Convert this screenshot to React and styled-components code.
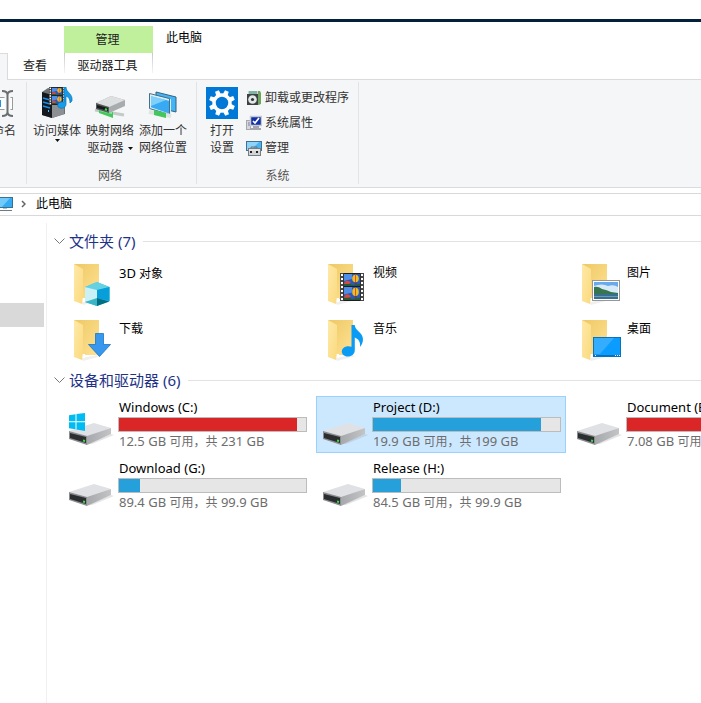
import React from "react";
import styled, { createGlobalStyle } from "styled-components";

const GlobalStyle = createGlobalStyle`
  * { box-sizing: border-box; }
  html, body, #root { height: 100%; }
  body {
    margin: 0;
    background: #fff;
    color: #000;
    font: 12px/16px "Noto Sans", "Noto Sans CJK SC", sans-serif;
    overflow: hidden;
  }
  button {
    margin: 0;
    padding: 0;
    border: 0;
    background: none;
    color: inherit;
    font: inherit;
    text-align: left;
    cursor: default;
  }
  svg { display: block; flex: none; }
`;

const Window = styled.div`
  display: flex;
  flex-direction: column;
  min-height: 100%;
  padding-top: 19px;
  overflow: hidden;
`;

const TitleBar = styled.header`
  display: grid;
  grid-template-columns: 64px 89px 1fr;
  border-top: 3px solid #04213b;
  padding-top: 4px;
  height: 34px;
`;

const ContextTitle = styled.div`
  grid-column: 2;
  display: flex;
  align-items: center;
  justify-content: center;
  padding-right: 2px;
  background: #c0f09c;
  color: #222;
`;

const WindowTitle = styled.h1`
  margin: 0;
  padding: 4px 13px;
  font-size: 12px;
  font-weight: 400;
`;

const TabBar = styled.nav`
  display: grid;
  grid-template-columns: 8px 56px 89px 1fr;
  height: 27px;
  background: linear-gradient(#dadbdc, #dadbdc) 8px 100% / 100% 1px no-repeat;
`;

const ActiveTabEdge = styled.div`
  background: #f5f6f7;
  border: 1px solid #dadbdc;
  border-width: 1px 1px 0 0;
`;

const Tab = styled.button`
  color: #222;
  text-align: center;
  padding: 0 2px 2px 0;
`;

const ContextTab = styled(Tab)`
  background:
    linear-gradient(#c8c8c8, #f4f4f4) 0 0 / 1px 20px no-repeat,
    linear-gradient(#c8c8c8, #f4f4f4) 100% 0 / 1px 20px no-repeat;
`;

const Ribbon = styled.section`
  display: flex;
  height: 108px;
  padding: 2px 0 3px;
  background: #f5f6f7;
  border-bottom: 1px solid #dadbdc;
  color: #333;
`;

const Group = styled.div`
  display: flex;
  flex-direction: column;
  justify-content: space-between;
  padding: 5px 9px 0 ${(p) => p.$start || 6}px;
  border-right: 1px solid #e2e3e4;
`;

const ClippedGroup = styled(Group)`
  width: 27px;
  padding: 5px 10px 0 0;
  align-items: flex-end;
  overflow: hidden;
`;

const GroupItems = styled.div`
  display: flex;
  gap: ${(p) => p.$gap || 5}px;
`;

const GroupLabel = styled.div`
  text-align: center;
  color: #555;
`;

const BigButton = styled.button`
  display: flex;
  flex-direction: column;
  align-items: center;
  white-space: nowrap;
  line-height: 17px;
  text-align: center;

  > svg { margin-bottom: 3px; }
`;

const Caret = styled.svg`
  display: ${(p) => (p.$inline ? "inline-block" : "block")};
  margin-left: ${(p) => (p.$inline ? 4 : 0)}px;
  vertical-align: middle;
`;

const SmallButtons = styled.div`
  display: flex;
  flex-direction: column;
  gap: 7px;
  padding-top: 2px;
`;

const SmallButton = styled.button`
  display: flex;
  align-items: center;
  gap: 3px;
  height: 18px;
  white-space: nowrap;
`;

const AddressBar = styled.nav`
  display: flex;
  align-items: center;
  height: 23px;
  margin-top: 5px;
  padding-bottom: 1px;
  border: solid #d9d9d9;
  border-width: 1px 0;
`;

const Crumb = styled.button`
  display: flex;
  align-items: center;
  padding-left: ${(p) => p.$start || 0}px;
`;

const CrumbArrow = styled.svg`
  margin-left: 8px;
`;

const Body = styled.div`
  display: flex;
  flex: 1;
  padding-top: 7px;
`;

const Sidebar = styled.aside`
  flex: none;
  width: 47px;
  padding: 80px 2px 0 0;
  border-right: 1px solid #f0f0f0;
`;

const SidebarSelection = styled.div`
  height: 24px;
  background: #d9d9d9;
`;

const Content = styled.main`
  flex: 1;
  min-width: 0;
  padding: 6px 0 0 7px;
  overflow: hidden;
`;

const SectionHeading = styled.button`
  display: flex;
  align-items: center;
  width: 100%;
  height: 24px;
  color: #1e3287;
  font-size: 15px;
  line-height: 24px;
  white-space: nowrap;

  > svg { margin-right: 4px; }

  &::after {
    content: "";
    flex: 1;
    height: 1px;
    margin-left: 8px;
    background: #e2e2e2;
  }
`;

const Tiles = styled.div`
  display: grid;
  grid-template-columns: repeat(3, 250px);
  gap: 4px;
  padding: 4px 0 3px 8px;
`;

const FolderTile = styled.button`
  display: flex;
  gap: 1px;
  height: 52px;
  padding: 3px 0 0 7px;
  line-height: 26px;
`;

const DriveTile = styled.button`
  display: grid;
  grid-template-columns: 49px 1fr;
  height: 57px;
  padding: 2px 4px 3px 6px;
  border: 1px solid ${(p) => (p.$selected ? "#99d1ff" : "transparent")};
  background: ${(p) => (p.$selected ? "#cce8ff" : "transparent")};
  white-space: nowrap;

  > svg { margin-top: 10px; }
`;

const DriveName = styled.div`
  height: 16px;
  padding-left: 1px;
`;

const UsageTrack = styled.div`
  height: 15px;
  margin: 2px 0 1px;
  border: 1px solid #bcbcbc;
  background: #e6e6e6;
`;

const UsageFill = styled.div`
  height: 100%;
  background: ${(p) => (p.$full ? "#da2626" : "#26a0da")};
`;

const DriveSpace = styled.div`
  padding-left: 1px;
  color: #6d6d6d;
`;

const Latin = styled.span`
  font-size: 13px;
`;

function RenameIcon() {
  return (
    <svg width="32" height="32" viewBox="0 0 32 32">
      <rect x="1.500" y="10.500" width="29" height="12" fill="#fff" stroke="#9a9a9a" />
      <rect x="4" y="13" width="15" height="7" fill="#1e90e8" />
      <path d="M22.500 9h6v15h-6z" fill="#f5f6f7" />
      <path d="M20 4q5.500 0 5.500 4v17q0 4-5.500 4M31 4q-5.500 0-5.500 4v17q0 4 5.500 4" fill="none" stroke="#6c6f72" strokeWidth="2" />
    </svg>
  );
}

function Balloons({ x, y, w, h }) {
  return (
    <svg x={x} y={y} width={w} height={h} viewBox="0 0 16 12" preserveAspectRatio="none">
      <rect width="16" height="12" fill="#2859b8" />
      <path d="M0 0h8v5L0 7z" fill="#4f8ee6" />
      <path d="M0 10l4-1 4 2 8-1v2H0z" fill="#255c35" />
      <path d="M1 7.500q3-2 6 1l-2 1.500H0z" fill="#d9483a" />
      <ellipse cx="11.500" cy="4.500" rx="3.300" ry="3.800" fill="#f1bc22" />
      <path d="M11.500 1v7" stroke="#d0582c" fill="none" />
      <path d="M11 8.500h1.500v2H11z" fill="#8e281e" />
    </svg>
  );
}

function Film({ x, y, w, h }) {
  return (
    <svg x={x} y={y} width={w} height={h} viewBox="0 0 24 28" preserveAspectRatio="none">
      <rect width="24" height="28" fill="#4a4a49" />
      {[1, 5, 9, 13, 17, 21, 25].map((t) => (
        <path key={t} d={`M1 ${t}h2v2h-2zM21 ${t}h2v2h-2z`} fill="#fff" />
      ))}
      <rect x="3.500" width="17" height="28" fill="#1d1d1d" />
      <Balloons x="4" y="1" w="16" h="12" />
      <Balloons x="4" y="14" w="16" h="13" />
    </svg>
  );
}

function MediaIcon() {
  return (
    <svg width="32" height="32" viewBox="0 0 32 32">
      <path d="M1 5l6-4 17 4v22l-13 4L1 28z" fill="#6d7074" />
      <path d="M11 8l12-3v22l-12 4z" fill="#8d9093" />
      <path d="M1 5l10 3v23L1 28z" fill="#15191d" />
      <path d="M2 11l7 2M2 15l7 2M2 19l7 2" stroke="#168ff0" strokeWidth="1.400" />
      <path d="M7 24h1" stroke="#45c9ff" strokeWidth="2" />
      <Film x="8" y="0" w="16" h="18" />
      <path d="M23 0h2c0 6 7 6 6 14l-2 2c0-5-2-6-4-7v8c0 3-3 5-6 4-4-1-3-7 4-6z" fill="#189be8" stroke="#0875bd" strokeWidth=".7" />
    </svg>
  );
}

function MapDriveIcon() {
  return (
    <svg width="32" height="32" viewBox="0 0 32 32">
      <path d="M1 23l29 5" stroke="#c3cbc9" strokeWidth="3" />
      <path d="M5 22l14 3v6L5 26z" fill="#42c95c" />
      <path d="M6 23l12 3" stroke="#8ce99b" strokeWidth="2" />
      <path d="M2 16l15-7 14 4v6L15 26 2 22z" fill="#a9acae" />
      <path d="M2 16l15-7 14 4-16 7z" fill="#dedfe1" />
      <path d="M2 16l13 4v6L2 22z" fill="#55595c" />
      <path d="M3 18l11 3v3L3 21z" fill="#171b1d" />
      <path d="M11 22l2 1" stroke="#36df44" strokeWidth="2" />
    </svg>
  );
}

function AddPlaceIcon() {
  return (
    <svg width="32" height="32" viewBox="0 0 32 32">
      <path d="M9 5l20 5v15L9 20z" fill="#43b4f5" stroke="#35627d" />
      <path d="M3 8l20 5v15L3 21z" fill="#38aaf4" stroke="#d9edf7" strokeWidth="2" />
      <path d="M2.500 6.500l20 5v16l-20-6z" fill="none" stroke="#477086" />
      <path d="M4 9l15 4L4 19z" fill="#7ed0fb" />
      <path d="M2 25l22 4" stroke="#dce5e1" strokeWidth="4" />
      <path d="M7 23l12 3v5L7 28z" fill="#43c75c" />
    </svg>
  );
}

function SettingsIcon() {
  return (
    <svg width="32" height="32" viewBox="0 0 32 32">
      <rect width="32" height="32" fill="#0078d7" />
      <circle cx="16" cy="16" r="8" fill="none" stroke="#fff" strokeWidth="3.500" />
      {[22, 67, 112, 157, 202, 247, 292, 337].map((a) => (
        <path key={a} d="M13.500 7.500l.5-4.500h4l.5 4.500z" fill="#fff" transform={`rotate(${a} 16 16)`} />
      ))}
    </svg>
  );
}

function UninstallIcon() {
  return (
    <svg width="16" height="18" viewBox="0 0 16 18">
      <path d="M2 2h12v14H2z" fill="#cfd3d2" />
      <path d="M3 2h8v4H3z" fill="#7fb3a4" />
      <path d="M12 2h2l1 2v11l-3 1z" fill="#6fa45f" />
      <rect x="1" y="5" width="11" height="11" fill="#3d4143" />
      <circle cx="6.500" cy="10.500" r="4.300" fill="#e4e7e7" />
      <circle cx="6.500" cy="10.500" r="1.600" fill="#303538" />
    </svg>
  );
}

function PropertiesIcon() {
  return (
    <svg width="16" height="16" viewBox="0 0 16 16">
      <rect x=".5" y="5.500" width="4" height="9" fill="#d6d7dc" stroke="#a5a7ad" />
      <path d="M2 8h2M2 10h2" stroke="#777b82" />
      <rect x="4.500" y="1.500" width="11" height="9" fill="#1231a7" stroke="#c7c9d1" strokeWidth="1.500" />
      <path d="M7 6l2 2 4-5" fill="none" stroke="#fff" strokeWidth="1.700" />
      <path d="M7 12h6M5 14h10" stroke="#8a8c94" strokeWidth="1.500" />
    </svg>
  );
}

function ManageIcon() {
  return (
    <svg width="16" height="16" viewBox="0 0 16 16">
      <rect x=".5" y="1.500" width="15" height="9" fill="#48b4f2" stroke="#42728d" />
      <path d="M1 2h12L5 10H1z" fill="#8cd4f9" />
      <path d="M5 9V7h6v2" fill="none" stroke="#6a7175" />
      <rect x="2.500" y="8.500" width="12" height="7" fill="#d1d3d5" stroke="#787d81" />
      <path d="M3 10h11" stroke="#f4f5f5" />
      <path d="M5 11v2M11 11v2" stroke="#1f2326" strokeWidth="2" />
    </svg>
  );
}

function ComputerIcon() {
  return (
    <svg width="13" height="16" viewBox="0 0 13 16">
      <rect x="-4" y="1.500" width="16.500" height="10" fill="#35abf1" stroke="#3a718f" />
      <path d="M0 2h10L2 11H0z" fill="#70cafa" />
      <path d="M0 14.500h12" stroke="#6b7c88" />
      <path d="M3 12.500h4" stroke="#b4c0c8" />
    </svg>
  );
}

const overlays = {
  cube: (
    <>
      <path d="M16 27l12-5 12.500 5V41L28 46l-12-4z" fill="#36c5dc" />
      <path d="M16 27l12-5 12.500 5L28 30z" fill="#64d2e2" />
      <path d="M16 27l12 3v10l-12 2z" fill="#c9f1f6" />
      <path d="M28 30l12.500-3v14L28 38z" fill="#079fda" />
      <path d="M16 42l12-4v8z" fill="#3bb5c6" />
      <path d="M28 38l12.500 3.500L28 46z" fill="#006f86" />
    </>
  ),
  film: <Film x="17" y="13" w="24" h="28" />,
  picture: (
    <>
      <rect x="15.500" y="20.500" width="27" height="20" fill="#fff" stroke="#969696" />
      <rect x="17" y="22" width="24" height="17" fill="#6aa9ec" />
      <path d="M17 26q8-3 14 0 6-2 10 1v7H17z" fill="#d6ebf7" />
      <path d="M17 27q4-1 8 2 5 1 9 3l7 1v1H17z" fill="#37754e" />
      <path d="M17 34h24v5H17z" fill="#386f91" />
      <path d="M17 36.500h24" stroke="#6d9bb2" fill="none" />
    </>
  ),
  arrow: (
    <path d="M26.500 17.500h8v11h7L30.500 40.500l-11-12h7z" fill="#3898ed" stroke="#1b75c5" strokeWidth=".8" />
  ),
  note: (
    <path d="M28.500 9h3.200c.3 6 8.300 7 8.300 14.500 0 2.500-1.500 6-3 7.500.7-5-1.500-8-5.200-9.500V34c0 4-3 6.500-7 6.500s-6-2.500-6-5c0-4 5-6.500 9.700-4.700z" fill="#0a9bf5" />
  ),
  desktop: (
    <>
      <rect x="16.500" y="21.500" width="27" height="19" fill="#0b9cff" stroke="#0873b9" />
      <path d="M17 22h20L23 38h-6z" fill="#34adff" />
      <path d="M17 39.500h26" stroke="#0870b8" />
      <path d="M18 39.500h1M38 39.500h1M40 39.500h1M42 39.500h1" stroke="#fff" />
    </>
  ),
};

function FolderIcon({ overlay }) {
  return (
    <svg width="49" height="48" viewBox="0 0 49 48" aria-hidden="true">
      <defs>
        <linearGradient id={`back-${overlay}`} x1="0" x2="1" y2="1">
          <stop stopColor="#edc864" />
          <stop offset="1" stopColor="#ffe294" />
        </linearGradient>
        <linearGradient id={`front-${overlay}`} x1="0" x2="1" y2="1">
          <stop stopColor="#ffe9a8" />
          <stop offset="1" stopColor="#fada7f" />
        </linearGradient>
      </defs>
      <path d="M12 42l17-3 4 1-19 5z" fill="#f0f0f0" />
      <path d="M5 4h25v35H5z" fill={`url(#back-${overlay})`} />
      <path d="M13 38h3v4h-3z" fill="#fff" />
      <path d="M5 4l9 5v27l-1 8-8-3z" fill={`url(#front-${overlay})`} />
      {overlays[overlay]}
    </svg>
  );
}

function DriveIcon({ system }) {
  return (
    <svg width="49" height="40" viewBox="0 0 49 40" aria-hidden="true">
      <defs>
        <linearGradient id="drive-side" x1="0" x2="1">
          <stop stopColor="#a6a8ab" />
          <stop offset="1" stopColor="#c2c4c6" />
        </linearGradient>
      </defs>
      <path d="M18 35l24-10 3 1-22 9z" fill="#999" opacity=".25" />
      <path d="M0 22l25-8 17 5-24 9z" fill="#e0e1e4" />
      <path d="M18 27l24-8v6L18 36z" fill="url(#drive-side)" />
      <path d="M0 22l18 5v9L0 30z" fill="#8b8d90" />
      <path d="M1 24l16 4v6L1 29z" fill="#2b2e30" />
      <path d="M14 31.500l2 .5" stroke="#3be33e" strokeWidth="2" />
      {system && (
        <path d="M0 6.300l6.500-1v7H0zM7.500 5.100L16 4v8.300H7.500zM0 13.300h6.500v7L0 19.300zM7.500 13.300H16V22l-8.500-1.400z" fill="#00bcf2" />
      )}
    </svg>
  );
}

function DownCaret({ inline }) {
  return (
    <Caret $inline={inline} width="5" height="3" viewBox="0 0 5 3">
      <path d="M0 0h5L2.500 3z" fill="#111" />
    </Caret>
  );
}

function Section({ title, children }) {
  return (
    <section>
      <SectionHeading>
        <svg width="11" height="8" viewBox="0 0 11 8">
          <path d="M.5 1.500l5 5 5-5" fill="none" stroke="#777" />
        </svg>
        {title}
      </SectionHeading>
      <Tiles>{children}</Tiles>
    </section>
  );
}

const folders = [
  { name: <><Latin>3D</Latin> 对象</>, overlay: "cube" },
  { name: "视频", overlay: "film" },
  { name: "图片", overlay: "picture" },
  { name: "下载", overlay: "arrow" },
  { name: "音乐", overlay: "note" },
  { name: "桌面", overlay: "desktop" },
];

const drives = [
  { name: "Windows (C:)", free: "12.5 GB", total: "231 GB", used: 95, full: true, system: true },
  { name: "Project (D:)", free: "19.9 GB", total: "199 GB", used: 90, selected: true },
  { name: "Document (E:)", free: "7.08 GB", total: "150 GB", used: 95, full: true },
  { name: "Download (G:)", free: "89.4 GB", total: "99.9 GB", used: 11 },
  { name: "Release (H:)", free: "84.5 GB", total: "99.9 GB", used: 15 },
];

function Drive({ drive }) {
  return (
    <DriveTile $selected={drive.selected}>
      <DriveIcon system={drive.system} />
      <div>
        <DriveName><Latin>{drive.name}</Latin></DriveName>
        <UsageTrack role="progressbar" aria-label={drive.name} aria-valuenow={drive.used}>
          <UsageFill $full={drive.full} style={{ width: `${drive.used}%` }} />
        </UsageTrack>
        <DriveSpace>
          <Latin>{drive.free} </Latin>可用，共<Latin> {drive.total}</Latin>
        </DriveSpace>
      </div>
    </DriveTile>
  );
}

export default function App() {
  return (
    <Window>
      <GlobalStyle />
      <TitleBar>
        <ContextTitle>管理</ContextTitle>
        <WindowTitle>此电脑</WindowTitle>
      </TitleBar>
      <TabBar>
        <ActiveTabEdge />
        <Tab>查看</Tab>
        <ContextTab>驱动器工具</ContextTab>
      </TabBar>
      <Ribbon>
        <ClippedGroup>
          <BigButton><RenameIcon />重命名</BigButton>
        </ClippedGroup>
        <Group>
          <GroupItems>
            <BigButton><MediaIcon />访问媒体<DownCaret /></BigButton>
            <BigButton>
              <MapDriveIcon />
              <span>映射网络<br />驱动器<DownCaret inline /></span>
            </BigButton>
            <BigButton>
              <AddPlaceIcon />
              <span>添加一个<br />网络位置</span>
            </BigButton>
          </GroupItems>
          <GroupLabel>网络</GroupLabel>
        </Group>
        <Group $start={9}>
          <GroupItems $gap={8}>
            <BigButton>
              <SettingsIcon />
              <span>打开<br />设置</span>
            </BigButton>
            <SmallButtons>
              <SmallButton><UninstallIcon />卸载或更改程序</SmallButton>
              <SmallButton><PropertiesIcon />系统属性</SmallButton>
              <SmallButton><ManageIcon />管理</SmallButton>
            </SmallButtons>
          </GroupItems>
          <GroupLabel>系统</GroupLabel>
        </Group>
      </Ribbon>
      <AddressBar>
        <Crumb aria-label="此电脑"><ComputerIcon /></Crumb>
        <CrumbArrow width="5" height="8" viewBox="0 0 5 8">
          <path d="M1 1l3 3-3 3" fill="none" stroke="#666" strokeWidth="1.500" />
        </CrumbArrow>
        <Crumb $start={10}>此电脑</Crumb>
      </AddressBar>
      <Body>
        <Sidebar><SidebarSelection /></Sidebar>
        <Content>
          <Section title="文件夹 (7)">
            {folders.map((f) => (
              <FolderTile key={f.overlay}>
                <FolderIcon overlay={f.overlay} />
                <span>{f.name}</span>
              </FolderTile>
            ))}
          </Section>
          <Section title="设备和驱动器 (6)">
            {drives.map((d) => <Drive key={d.name} drive={d} />)}
          </Section>
        </Content>
      </Body>
    </Window>
  );
}
